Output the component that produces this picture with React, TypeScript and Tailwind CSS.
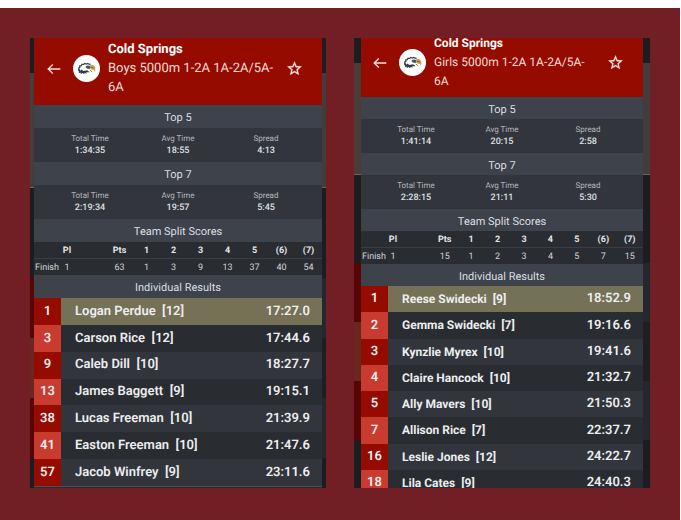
import { clsx } from "clsx";

type Runner = { place: number; name: string; grade: number; time: string };
type Stat = { total: string; avg: string; spread: string };
type Team = {
    title: string;
    top5: Stat;
    top7: Stat;
    splits: string[];
    runners: Runner[];
};

const boys: Team = {
    title: "Boys 5000m 1-2A 1A-2A/5A-6A",
    top5: { total: "1:34:35", avg: "18:55", spread: "4:13" },
    top7: { total: "2:19:34", avg: "19:57", spread: "5:45" },
    splits: ["63", "1", "3", "9", "13", "37", "40", "54"],
    runners: [
        { place: 1, name: "Logan Perdue", grade: 12, time: "17:27.0" },
        { place: 3, name: "Carson Rice", grade: 12, time: "17:44.6" },
        { place: 9, name: "Caleb Dill", grade: 10, time: "18:27.7" },
        { place: 13, name: "James Baggett", grade: 9, time: "19:15.1" },
        { place: 38, name: "Lucas Freeman", grade: 10, time: "21:39.9" },
        { place: 41, name: "Easton Freeman", grade: 10, time: "21:47.6" },
        { place: 57, name: "Jacob Winfrey", grade: 9, time: "23:11.6" },
    ],
};

const girls: Team = {
    title: "Girls 5000m 1-2A 1A-2A/5A-6A",
    top5: { total: "1:41:14", avg: "20:15", spread: "2:58" },
    top7: { total: "2:28:15", avg: "21:11", spread: "5:30" },
    splits: ["15", "1", "2", "3", "4", "5", "7", "15"],
    runners: [
        { place: 1, name: "Reese Swidecki", grade: 9, time: "18:52.9" },
        { place: 2, name: "Gemma Swidecki", grade: 7, time: "19:16.6" },
        { place: 3, name: "Kynzlie Myrex", grade: 10, time: "19:41.6" },
        { place: 4, name: "Claire Hancock", grade: 10, time: "21:32.7" },
        { place: 5, name: "Ally Mavers", grade: 10, time: "21:50.3" },
        { place: 7, name: "Allison Rice", grade: 7, time: "22:37.7" },
        { place: 16, name: "Leslie Jones", grade: 12, time: "24:22.7" },
        { place: 18, name: "Lila Cates", grade: 9, time: "24:40.3" },
    ],
};

const splitHeads = ["Pts", "1", "2", "3", "4", "5", "(6)", "(7)"];

function ArrowIcon() {
    return (
        <svg viewBox="0 0 14 14" className="size-3.5" fill="none" stroke="#f5dcd8" strokeWidth="1.4">
            <path d="M13.3 7H1.2M5.8 2.4L1.2 7l4.6 4.6" />
        </svg>
    );
}

function StarIcon() {
    return (
        <svg viewBox="0 0 24 24" className="size-[17px]" fill="#f8e6e2" stroke="#f8e6e2" strokeWidth=".4">
            <path d="M22 9.24l-7.19-.62L12 2 9.19 8.63 2 9.24l5.46 4.73L5.82 21 12 17.27 18.18 21l-1.63-7.03L22 9.24zM12 15.4l-3.76 2.27 1-4.28-3.32-2.88 4.38-.38L12 6.1l1.71 4.04 4.38.38-3.32 2.88 1 4.28L12 15.4z" />
        </svg>
    );
}

function EagleLogo() {
    return (
        <svg viewBox="0 0 27 27" className="size-[27px] shrink-0">
            <circle cx="13.5" cy="13.5" r="13.5" fill="#fff" />
            <path d="M6.6 16l-.9-3 1.2-.6-.2-1.6 1.7-.2.5-1.3 1.8.1 1-.9 1.7.5 1.4-.6 1.2.8 1.6.1" fill="none" stroke="#34414c" strokeWidth="1.2" />
            <path d="M5.2 13.4l-.1 2.6 1 .3-.4 2 1.7-.7.5 1.4 1.6-.9 1.2 1 1.2-1.1 2 .7-.8-1.5 3.6.1-2.6-2-3.8.6-1.8-1.4-1.4 1.2z" fill="#303b45" />
            <path d="M12.4 12l1.6-1.4 2.6.2 1.4 1.6-1.8 1.5-2.4-.4z" fill="#4a5356" />
            <path d="M17.2 9.8c3-.4 5.1 1.2 5.2 4 0 1.5-.4 2.3-.9 3-.3-1.8-1-2.2-2.4-2.1l-1.9-.9z" fill="#c5a04f" />
            <path d="M18 12.2l2.6.6M16.8 14.8l2.4 2.2" stroke="#665331" strokeWidth=".8" />
        </svg>
    );
}

function SectionTitle({ children, small }: { children: string; small?: boolean }) {
    return (
        <h2 className={clsx("bg-[#3e424a] text-center text-[11px] leading-[26px] text-[#dcdfe3]", small ? "h-[22px]" : "h-[23px]")}>
            {children}
        </h2>
    );
}

function Stats({ stat }: { stat: Stat }) {
    const items = [
        { label: "Total Time", value: stat.total },
        { label: "Avg Time", value: stat.avg },
        { label: "Spread", value: stat.spread },
    ];
    return (
        <dl className="grid h-[34px] grid-cols-3 bg-[#32353b] px-3 pt-1 text-center">
            {items.map((item) => (
                <div key={item.label}>
                    <dt className="text-[8px] leading-[13px] text-[#b4b7bb]">{item.label}</dt>
                    <dd className="text-[9px] leading-[13px] font-medium text-[#dfe1e4]">{item.value}</dd>
                </div>
            ))}
        </dl>
    );
}

function SplitTable({ splits }: { splits: string[] }) {
    return (
        <table className="w-full table-fixed border-collapse bg-[#292c31] text-center text-[9px] leading-[14px] text-[#d2d5d9]">
            <colgroup>
                <col className="w-[9%]" />
                <col className="w-[16%]" />
            </colgroup>
            <thead>
                <tr className="border-b border-[#3a3e43] text-[#e4e6e8]">
                    <td></td>
                    <th className="pt-0.5 pr-8 font-bold">Pl</th>
                    {splitHeads.map((head) => (
                        <th key={head} className="pt-0.5 font-bold">{head}</th>
                    ))}
                </tr>
            </thead>
            <tbody>
                <tr>
                    <th className="pt-0.5 pl-px text-left font-normal whitespace-nowrap">Finish</th>
                    <td className="pt-0.5 pr-8">1</td>
                    {splits.map((score, i) => (
                        <td key={i} className="pt-0.5">{score}</td>
                    ))}
                </tr>
            </tbody>
        </table>
    );
}

// strip of the dimmed page that stays visible beside the sheet
function Backdrop({ small, right }: { small?: boolean; right?: boolean }) {
    const row = small ? "h-[59px]" : "h-[60px]";
    return (
        <div className={clsx("flex flex-col bg-[#1b1d20]", small ? "w-[7px]" : "w-1")}>
            <div className={small ? "h-[25px]" : "h-[35px]"} />
            <div className={clsx("border-b border-[#6b6660]", right ? "bg-[#423c3b]" : "bg-[#493c38]", small ? "h-[112px]" : "h-[115px]")} />
            <div className={small ? "h-[88px]" : "h-[90px]"} />
            <div className={clsx(row, right ? "bg-[#24272b]" : "bg-[#570505]")} />
            <div className={clsx(row, right ? "bg-[#1d1f22]" : "bg-[#6b271f]")} />
            <div className={clsx(row, right ? "bg-[#24272b]" : "bg-[#570505]")} />
        </div>
    );
}

function ResultCard({ team, small }: { team: Team; small?: boolean }) {
    return (
        <section className="flex h-[450px] overflow-hidden bg-[#292c31]">
            <Backdrop small={small} />
            <div className="min-w-0 flex-1">
                <header className={clsx("flex items-end bg-[#950b00] pr-[19px]", small ? "h-[59px] pb-1.5 pl-3" : "h-[67px] pb-2 pl-[13px]")}>
                    <div className="flex flex-1 items-center">
                        <button type="button" aria-label="Back"><ArrowIcon /></button>
                        <div className="ml-3"><EagleLogo /></div>
                        <div className={clsx("ml-2 flex-1 leading-[19px]", small ? "mr-4 text-[12px]" : "mr-2 text-[13px]")}>
                            <h1 className="font-bold text-white">Cold Springs</h1>
                            <p className="text-[#f3dcd6]">{team.title}</p>
                        </div>
                        <button type="button" aria-label="Favorite"><StarIcon /></button>
                    </div>
                </header>
                <SectionTitle small={small}>Top 5</SectionTitle>
                <Stats stat={team.top5} />
                <SectionTitle small={small}>Top 7</SectionTitle>
                <Stats stat={team.top7} />
                <SectionTitle small={small}>Team Split Scores</SectionTitle>
                <SplitTable splits={team.splits} />
                <SectionTitle small={small}>Individual Results</SectionTitle>
                <ol className={clsx("grid auto-rows-fr", small ? "h-[210px]" : "h-[189px] border-b border-[#4a4d52]")}>
                    {team.runners.map((runner, i) => (
                        <li
                            key={runner.place}
                            className={clsx(
                                "flex items-center text-[13px] font-semibold text-[#eceef0]",
                                i === 0 ? "bg-[#757157]" : i % 2 ? "bg-[#292c31]" : "bg-[#32353b]"
                            )}
                        >
                            <span className={clsx("flex h-full w-[27px] items-center justify-center", i % 2 ? "bg-[#ca3b2f]" : "bg-[#950b00]")}>
                                {runner.place}
                            </span>
                            <span className={clsx("ml-3.5 flex-1 whitespace-pre", small && "text-[12px] font-bold")}>
                                {`${runner.name}  [${runner.grade}]`}
                            </span>
                            <span className="pr-3">{runner.time}</span>
                        </li>
                    ))}
                </ol>
            </div>
            <Backdrop small={small} right />
        </section>
    );
}

export default function App() {
    return (
        <div className="min-h-screen bg-white pt-2 pr-px font-['Roboto',sans-serif] [text-rendering:geometricPrecision]">
            <main className="grid min-h-[512px] grid-cols-2 items-start gap-7 bg-[#711e24] px-[30px] py-[30px]">
                <ResultCard team={boys} />
                <ResultCard team={girls} small />
            </main>
        </div>
    );
}
